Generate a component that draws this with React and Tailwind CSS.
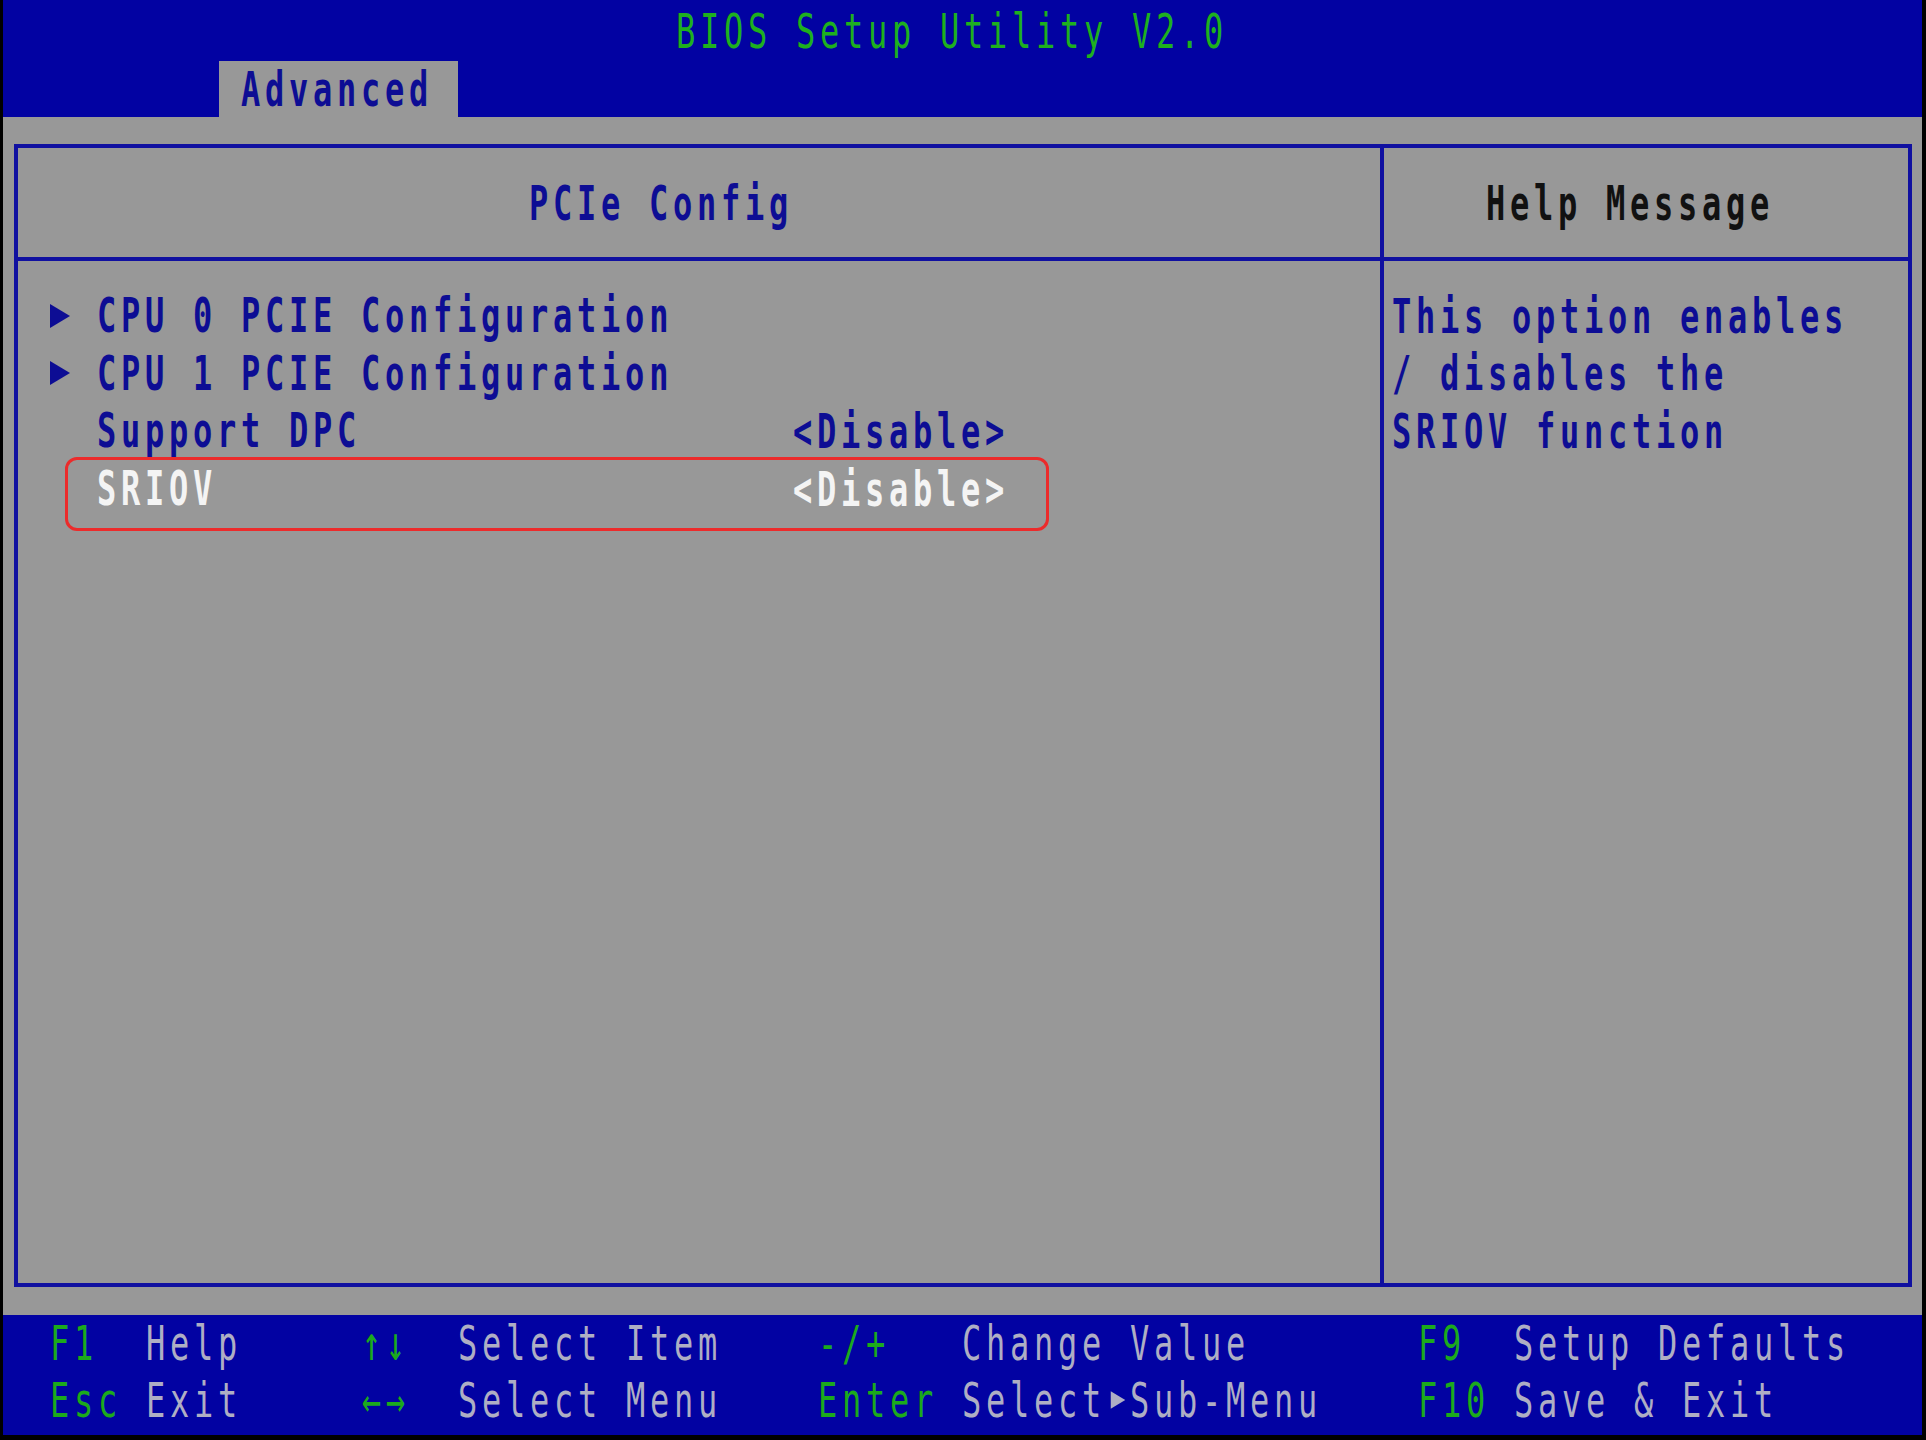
import React from "react";

// 80x25 text-mode look: every cell is 24px wide, rows ~57.6px high
const mono = "font-['DejaVu_Sans_Mono','Liberation_Mono',monospace] text-[32px] leading-none tracking-[4.74px]";

const Txt = ({ children, className = "" }) => (
  <span className={`inline-block origin-center scale-y-150 whitespace-pre ${mono} ${className}`}>
    {children}
  </span>
);

const Arrow = ({ color = "#0d0d94", w = 22, h = 26 }) => (
  <svg width={w} height={h} viewBox="0 0 22 26">
    <polygon points="1,1 21,13 1,25" fill={color} />
  </svg>
);

const items = [
  { arrow: true, label: "CPU 0 PCIE Configuration" },
  { arrow: true, label: "CPU 1 PCIE Configuration" },
  { label: "Support DPC", value: "<Disable>" },
  { label: "SRIOV", value: "<Disable>", selected: true },
];

const help = ["This option enables", "/ disables the", "SRIOV function"];

const Row = ({ arrow, label, value, selected }) => {
  const color = selected ? "text-[#f4f4f4]" : "text-[#0d0d94]";
  return (
    <div className="relative flex h-[57.6px] items-center">
      <div className="w-[31px] shrink-0" />
      <div className="flex w-[48px] shrink-0 items-center">{arrow && <Arrow />}</div>
      <div className="w-[696px] shrink-0">
        <Txt className={`font-bold ${color}`}>{label}</Txt>
      </div>
      {value && <Txt className={`font-bold ${color}`}>{value}</Txt>}
      {selected && (
        <div className="absolute left-[47px] top-[-3px] h-[74px] w-[984px] rounded-[12px] border-[3px] border-[#ec2b2b]" />
      )}
    </div>
  );
};

const Key = ({ children }) => <Txt className="text-[#1caa1c]">{children}</Txt>;
const Desc = ({ children }) => <Txt className="text-[#aeaec4]">{children}</Txt>;

const footer = [
  [["F1", "Help"], ["↑↓", "Select Item"], ["-/+", "Change Value"], ["F9", "Setup Defaults"]],
  [["Esc", "Exit"], ["←→", "Select Menu"], ["Enter", "SUB"], ["F10", "Save & Exit"]],
];
const keyW = ["w-[96px]", "w-[96px]", "w-[144px]", "w-[96px]"];
const descW = ["w-[216px]", "w-[360px]", "w-[456px]", ""];

export default function App() {
  return (
    <div className="flex h-[1440px] w-[1926px] flex-col bg-black pb-[5px] pl-[3px] pr-[4px]">
      {/* top bar */}
      <div className="flex h-[117px] shrink-0 flex-col bg-[#0202a2]">
        <div className="flex h-[61px] items-center pl-[673px]">
          <Txt className="text-[#1eb01e]">BIOS Setup Utility V2.0</Txt>
        </div>
        <div className="ml-[216px] flex h-[56px] w-[239px] items-center bg-[#989898] pl-[22px]">
          <Txt className="font-bold text-[#0d0d94]">Advanced</Txt>
        </div>
      </div>

      {/* main panel */}
      <div className="flex flex-1 flex-col bg-[#989898] pb-[28px] pl-[11px] pr-[10px] pt-[27px]">
        <div className="flex flex-1 border-[4px] border-[#1010a0]">
          <div className="flex w-[1366px] shrink-0 flex-col border-r-[4px] border-[#1010a0]">
            <div className="flex h-[113px] items-center border-b-[4px] border-[#1010a0] pl-[511px]">
              <Txt className="font-bold text-[#0d0d94]">PCIe Config</Txt>
            </div>
            <div className="flex flex-col pt-[26px]">
              {items.map((it) => (
                <Row key={it.label} {...it} />
              ))}
            </div>
          </div>
          <div className="flex flex-1 flex-col">
            <div className="flex h-[113px] items-center border-b-[4px] border-[#1010a0] pl-[102px]">
              <Txt className="font-bold text-[#111]">Help Message</Txt>
            </div>
            <div className="flex flex-col pl-[8px] pt-[26px]">
              {help.map((line) => (
                <div key={line} className="flex h-[57.6px] items-center">
                  <Txt className="font-bold text-[#0d0d94]">{line}</Txt>
                </div>
              ))}
            </div>
          </div>
        </div>
      </div>

      {/* key legend */}
      <div className="flex h-[120px] shrink-0 flex-col bg-[#0202a2] pl-[47px]">
        {footer.map((row, r) => (
          <div key={r} className="flex h-[57px] items-center">
            {row.map(([k, d], i) => (
              <React.Fragment key={k}>
                <div className={`${keyW[i]} shrink-0`}>
                  <Key>{k}</Key>
                </div>
                <div className={`${descW[i]} shrink-0`}>
                  {d === "SUB" ? (
                    <span className="inline-flex items-center">
                      <Desc>Select</Desc>
                      <span className="flex w-[24px] justify-center">
                        <Arrow color="#aeaec4" w={16} h={22} />
                      </span>
                      <Desc>Sub-Menu</Desc>
                    </span>
                  ) : (
                    <Desc>{d}</Desc>
                  )}
                </div>
              </React.Fragment>
            ))}
          </div>
        ))}
      </div>
    </div>
  );
}
